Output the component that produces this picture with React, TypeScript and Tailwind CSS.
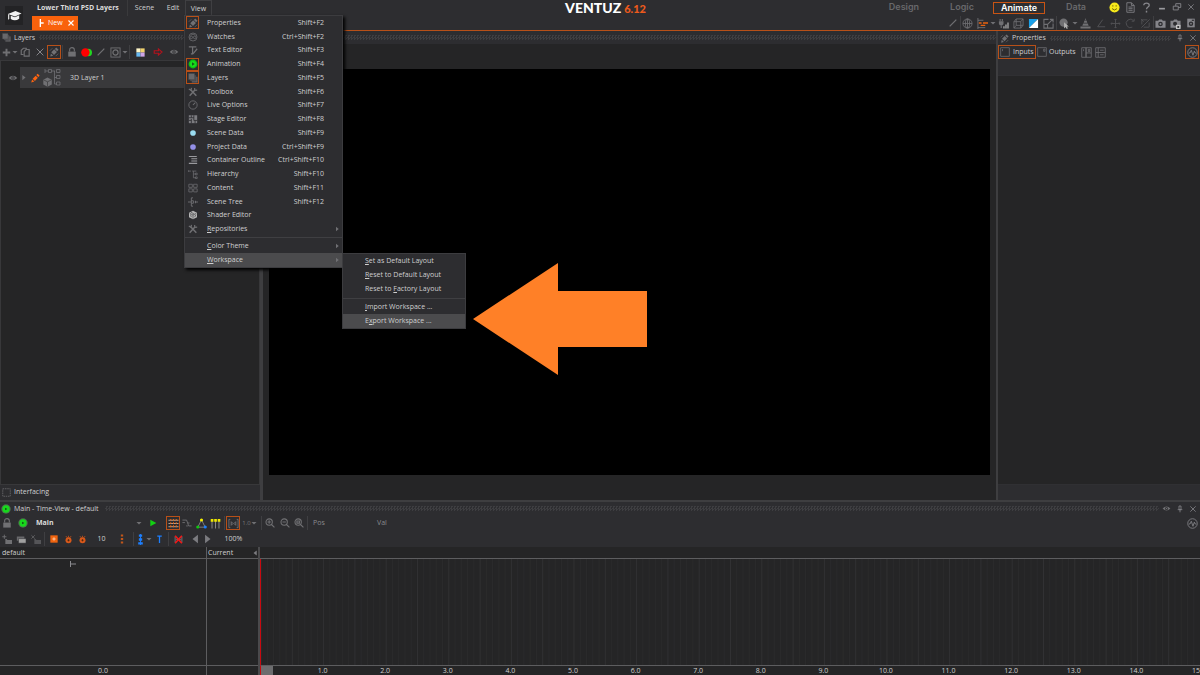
import React from "react";

const G = "#707073";

const art: Record<string, React.ReactNode> = {
  plus: <path d="M6 1v10M1 6h10" stroke={G} strokeWidth="2.600" />,
  copy: <path d="M4 9H1.500V4L4 1.500h3.500V3M5 11V5.500L7.300 3H11v8z" stroke={G} strokeWidth="1.400" />,
  x: <path d="M2 2l8 8M10 2l-8 8" stroke="#85858a" strokeWidth="1.200" />,
  pen: (
    <g fill={G}>
      <path d="M1.500 11.500l.8-3.800 2.900 2.800z" />
      <path d="M2.700 6.300l3.500-3.500 3.300 3.200L6 9.700z" />
      <path d="M7 2.300L8.700.5l2.800 2.700L9.800 5z" />
      <path d="M1 4.500L4 1.500M8 11l3-3" stroke={G} strokeWidth=".8" />
    </g>
  ),
  penOrange: (
    <g fill="#ff6410">
      <path d="M1.500 11.500l1-3.800 2.700 2.600z" />
      <path d="M3.200 6.800l3.600-3.600 2.600 2.600-3.500 3.700z" />
      <path d="M7.600 2.400L9.200.8l2.400 2.400L10 4.900z" />
    </g>
  ),
  lock: (
    <>
      <rect x="1.500" y="5.500" width="9" height="6" fill={G} />
      <path d="M3.200 5.500V3.200a2.800 2.500 0 015.600 0v2.300" stroke={G} strokeWidth="1.300" />
    </>
  ),
  redGreen: (
    <>
      <circle cx="7.800" cy="6" r="4.200" fill="#20d820" />
      <circle cx="4.800" cy="6" r="4.600" fill="#f00" />
    </>
  ),
  slash: <path d="M2 10l8-8" stroke={G} strokeWidth="1.500" />,
  mask: (
    <>
      <rect x="1" y="1" width="10" height="10" stroke={G} />
      <circle cx="6" cy="6" r="2.800" stroke={G} strokeWidth="1.300" />
    </>
  ),
  palette: (
    <>
      <path d="M1.500 1.500H6V6H1.500z" fill="#fff6c8" />
      <path d="M6 1.500h4.500V6H6z" fill="#f2d36e" />
      <path d="M1.500 6H6v4.500H1.500z" fill="#67b8f2" />
      <path d="M6 6h4.500v4.500H6z" fill="#cfa5e8" />
    </>
  ),
  redArrow: <path d="M1.500 4.500h5V2.300L10.800 6 6.500 9.700V7.500h-5z" stroke="#b3121c" strokeWidth="1.400" />,
  eye: (
    <>
      <path d="M.8 6Q6 .8 11.200 6 6 11.200.8 6z" fill={G} />
      <circle cx="6" cy="6" r="2" fill="#2d2d30" />
      <circle cx="6" cy="6" r="1" fill={G} />
    </>
  ),
  caret: <path d="M1 4h10L6 9z" fill={G} />,
  caretR: <path d="M4 1.500v9L9.500 6z" fill={G} />,
  globe: (
    <g stroke={G} strokeWidth=".9">
      <circle cx="6" cy="6" r="5" />
      <ellipse cx="6" cy="6" rx="2.300" ry="5" />
      <path d="M1 6h10M6 1v10" />
    </g>
  ),
  align: (
    <>
      <path d="M1 0v12M1 2.500h6M1 10.500h8" stroke={G} />
      <path d="M2 5.500h3M6.500 5.500H12M4 8h5" stroke="#e8630f" strokeWidth="1.500" />
    </>
  ),
  bars: (
    <>
      <path d="M1 3.500h5v3L5 8H2L1 6.500z" fill={G} />
      <path d="M2.300 1v2.500M4.700 1v2.500M3.500 8v3" stroke={G} strokeWidth="1.200" />
      <path d="M6.500 11.500V9M8.700 11.500V7M10.900 11.500V5" stroke="#b5b5b5" strokeWidth="1.300" />
    </>
  ),
  cube: <path d="M1 4h7.500v7H1zM3.500 1H11v7H3.500zM1 4l2.500-3M8.500 4L11 1M8.500 11L11 8M1 11l2.500-3" stroke={G} strokeWidth=".9" />,
  blueWhite: (
    <>
      <path d="M1 1h10L1 11z" fill="#1ba0e8" />
      <path d="M11 1v10H1z" fill="#fff" />
    </>
  ),
  resize: <path d="M6 1.500H1v9.500h10V6M1 7h4v4M5 7l5.500-5.500M7.500 1.500H11V5" stroke={G} strokeWidth="1.200" />,
  sphere: (
    <>
      <circle cx="5" cy="5" r="4.500" fill={G} />
      <path d="M5.500 4.500v7l1.700-1.600 1.300 2 1.200-.7-1.200-2h2.200z" fill="#b0b0b0" />
    </>
  ),
  cone: <path d="M.5 11.500V9.300h11v2.200zM2.500 8.500L3.500 6h5l1 2.500zM4 5.200L4.900 2.700h2.200L8 5.200zM5.200 2L6 .3 6.800 2z" fill={G} />,
  angle: <path d="M8 2L2 10.500h9" stroke="#515154" strokeWidth="1.200" />,
  move: <path d="M6 1v10M1 6h10M4.800 2.200L6 1l1.200 1.200M4.800 9.800L6 11l1.200-1.200M2.200 4.800L1 6l1.200 1.200M9.800 4.800L11 6 9.800 7.200" stroke="#515154" />,
  rotate: <path d="M9.500 3A4.600 4.600 0 108 10M10 .8V3.500H7.300" stroke="#515154" />,
  scale: <path d="M1.500 10.500L10.500 1.500M2 2h6M2 2v5M10 5v5H4M1 1l3 3" stroke="#515154" />,
  camera: (
    <>
      <path d="M.5 3h3l1-1.500h3l1 1.500h3v7.500H.5z" fill="#85858a" />
      <circle cx="6" cy="6.500" r="2.500" fill="#2d2d30" />
      <circle cx="6" cy="6.500" r="1.100" fill="#85858a" />
    </>
  ),
  cameraLock: (
    <>
      <path d="M.5 3h3l1-1.500h3l1 1.500h3v7.500H.5z" fill="#85858a" />
      <circle cx="5.500" cy="6.300" r="2.200" fill="#2d2d30" />
      <path d="M6.500 7.500h5V12h-5z" fill="#c5c5c5" />
      <path d="M8 8.800h2v2H8z" fill="#2d2d30" />
    </>
  ),
  disk: (
    <>
      <path d="M1.500.8h9v10.400h-9z" fill="#85858a" />
      <circle cx="6" cy="6.800" r="2.700" fill="#2d2d30" />
      <circle cx="6" cy="6.800" r="1" fill="#85858a" />
      <path d="M7 2h2.500v1.500H7z" fill="#2d2d30" />
    </>
  ),
  smiley: (
    <>
      <circle cx="6" cy="6" r="5.500" fill="#f7ea1b" />
      <path d="M4.200 3.500v1.500M7.800 3.500v1.500M3.300 7.200Q6 10.300 8.700 7.200" stroke="#6b6000" />
    </>
  ),
  doc: <path d="M2 .8h5l3 3v7.400H2zM7 .8v3h3M3.800 5.500h4.500M3.800 7.300h4.500M3.800 9.100h4.500" stroke="#85858a" strokeWidth=".9" />,
  help: (
    <>
      <path d="M3 3.500C3 .4 9 .4 9 3.600 9 5.500 6 5.600 6 8" stroke="#85858a" strokeWidth="1.400" />
      <path d="M5.200 9.500h1.600V11.500H5.200z" fill="#85858a" />
    </>
  ),
  min: <path d="M2.500 8h7" stroke="#9a9a9e" strokeWidth="2" />,
  restore: <path d="M1.500 5h6v4.500h-6zM4.500 5V2h6v4.500H7.500" stroke="#85858a" strokeWidth="1.100" />,
  pin: <path d="M4.500 1.500h3V7h-3zM2.500 7h7M6 7v4" stroke="#85858a" strokeWidth="1.200" />,
  wave: (
    <>
      <circle cx="6" cy="6" r="5.200" stroke="#85858a" strokeWidth=".9" />
      <path d="M1.800 6.500h1.500l1.400-3 1.800 5.500 1.500-4.500.9 2h1.400" stroke="#85858a" strokeWidth=".9" />
    </>
  ),
  inputs: <path d="M.8.8h10.400v10.400H.8zM3 2.500v2.500" stroke={G} strokeWidth=".9" />,
  outputs: <path d="M.8.8h10.400v10.400H.8zM8 2.500h1.500v2.700H8z" stroke={G} strokeWidth=".9" />,
  cols: <path d="M.8.8h4.700v10.400H.8zM5.500.8h5.700v10.400H5.500zM2.800 2.500v2M8 2.500h1.500v2.500H8zM5.500 6.500h5.700" stroke={G} strokeWidth=".9" />,
  rowsIcon: <path d="M.8.8h10.400v10.400H.8zM.8 6h10.400M3.500 1v10M5.500 3.500h4M5.500 8.500h4" stroke={G} strokeWidth=".9" />,
  layers: (
    <>
      <path d="M4.500 4.500h7v7h-7z" fill="#606063" />
      <path d="M2.500 2.500h7v7h-7z" fill="#57575a" stroke="#3a3a3d" strokeWidth=".5" />
      <path d="M.5.5h7.500V8H.5z" fill="#68686b" stroke="#3a3a3d" strokeWidth=".5" />
    </>
  ),
  watches: (
    <g stroke={G} strokeWidth=".9">
      <circle cx="6" cy="6" r="4.800" />
      <circle cx="4" cy="6.500" r="1.500" />
      <circle cx="8" cy="6.500" r="1.500" />
      <path d="M3 4l3-1.500L9 4" />
    </g>
  ),
  textEd: <path d="M1 2.200h9M5.500 2.200V10.500M3.500 10.500h2M11 4.500L7 9.500l-1.500 1.500" stroke={G} strokeWidth="1.500" />,
  anim: (
    <>
      <circle cx="6" cy="6" r="5.300" fill="#0cc112" />
      <circle cx="6" cy="6" r="3.600" fill="#19dc1e" />
      <path d="M4.800 4v4l3.300-2z" fill="#15551a" />
    </>
  ),
  tools: (
    <g stroke={G}>
      <path d="M3.500 3.500l6.500 7M8 4l-6 6.500" strokeWidth="1.800" />
      <path d="M1 2.500l2.500 1.500L4.200 1M8 1.200L8 4l3-.3" strokeWidth="1.400" />
    </g>
  ),
  gauge: (
    <g stroke={G} strokeWidth="1">
      <circle cx="6" cy="6" r="5" />
      <path d="M6 6l2.500-2.700" strokeWidth="1.300" />
    </g>
  ),
  stage: (
    <>
      <path d="M1 1.500h10v9.500H1z" fill="#7c7c80" />
      <path d="M1 4.500h6M7 7.700h4M1 7.700h3M4 1.500v3M7 1.500v6.200M4 6v5M8.500 7.700V11" stroke="#2d2d30" />
    </>
  ),
  cyan: <circle cx="6" cy="6" r="3.400" fill="#9adcf0" />,
  violet: <circle cx="6" cy="6" r="3.400" fill="#9490e8" />,
  outline: <path d="M1 1.800h9.500M4 4.500h7M4 7.200h7M1 10h10" stroke="#9a9a9e" strokeWidth="1.300" />,
  hier: <path d="M.5 1.500v2M.5 2.500h3M5 2.500h5M6.500 2.500v8M6.500 6H9M6.500 10.500H9M9 5h2v2H9zM9 9.500h2v2H9z" stroke={G} strokeWidth=".9" />,
  content: <path d="M1 1.500h4.200v3.700H1zM6.800 1.500H11v3.700H6.800zM1 7h4.200v3.700H1zM6.800 7H11v3.700H6.800z" stroke={G} strokeWidth=".9" />,
  tree: <path d="M0 6h4M6 1H4v10h2M4 4.500h2.500v3H4M8 6h4M9 4.500v3" stroke={G} strokeWidth="1.100" />,
  shader: (
    <>
      <path d="M6 .8l4.800 2.600v5.200L6 11.200 1.200 8.600V3.400z" fill="#b5b5b5" />
      <path d="M2 4l4 2 4-2M6 6v4.500M3.500 2.500L7.500 5M4 8.500l-1-3M8 8.500l1.500-3" stroke="#505053" strokeWidth=".9" />
    </>
  ),
  grid: (
    <>
      <path d="M.5 2.500h11M.5 6h11M.5 9.500h11" stroke="#c8b8a8" strokeWidth=".9" />
      <path d="M3 1v10M6 1v10M9 1v10" stroke="#e8630f" strokeWidth="1.100" strokeDasharray="2 1.500" />
    </>
  ),
  step: <path d="M.5 2.500h5L8 9.500h3.500M.5 5.500h3M5 9.500h2M7 6h2" stroke={G} strokeWidth="1.100" />,
  tri: (
    <>
      <path d="M6 2L2 10h8z" stroke="#999" strokeWidth=".8" />
      <circle cx="6" cy="2.200" r="1.700" fill="#f5f000" />
      <circle cx="1.900" cy="9.800" r="1.700" fill="#10c810" />
      <circle cx="10.100" cy="9.800" r="1.700" fill="#1c7fff" />
    </>
  ),
  keys: (
    <>
      <path d="M2.200 3v8.500M6 3v8.500M9.800 3v8.500" stroke="#999" strokeWidth=".9" />
      <path d="M.8 1h2.900v3H.8zM4.600 1h2.900v3H4.600zM8.400 1h2.900v3H8.400z" fill="#f0e800" />
    </>
  ),
  snap: <path d="M2.500 1.500H1v9h1.500M9.500 1.500H11v9H9.500M3.500 4v4l2-2zM8.500 4v4l-2-2z" stroke={G} />,
  zoomIn: <path d="M5 1a3.800 3.800 0 110 7.600A3.800 3.800 0 015 1zM7.800 7.800L11.300 11.300M3 4.800h4M5 2.800v4" stroke={G} strokeWidth="1.300" />,
  zoomOut: <path d="M5 1a3.800 3.800 0 110 7.600A3.800 3.800 0 015 1zM7.800 7.800L11.300 11.300M3 4.800h4" stroke={G} strokeWidth="1.300" />,
  zoomFit: <path d="M5 1a3.800 3.800 0 110 7.600A3.800 3.800 0 015 1zM7.800 7.800L11.300 11.300M3.500 3.500h3v2.600h-3z" stroke={G} strokeWidth="1.300" />,
  play: <path d="M2 1v10l9-5z" fill="#12d012" />,
  addTrack: (
    <>
      <path d="M4 6h1.500l1 1.200H12V12H4z" fill={G} />
      <path d="M2.800.8v5M.3 3.300h5" stroke={G} strokeWidth="1.100" />
    </>
  ),
  dupTrack: (
    <>
      <path d="M1 3h9v5H1z" fill="#68686b" />
      <path d="M3 5.500h9v5.500H3z" fill="#a0a0a0" stroke="#2d2d30" strokeWidth=".6" />
    </>
  ),
  delTrack: (
    <>
      <path d="M4 6h1.500l1 1.200H12V12H4z" fill="#555558" />
      <path d="M.5 1.500l4 4M4.500 1.500l-4 4" stroke="#666669" />
    </>
  ),
  keyAdd: (
    <>
      <path d="M.5.5h11v11H.5z" fill="#f0640f" />
      <path d="M6 3.500v5M3.500 6h5" stroke="#ffd7b8" strokeWidth="1.300" />
    </>
  ),
  bug: (
    <>
      <circle cx="6" cy="7" r="4" fill="#d8581a" />
      <path d="M2.500 1.500l2 2.200M9.500 1.500l-2 2.200M6 1v2" stroke="#d8581a" />
      <path d="M6 5.500v3M4.500 7h3" stroke="#33200f" strokeWidth=".9" />
    </>
  ),
  dots: <path d="M4.600.5h2.800v2.600H4.600zM4.600 4.700h2.800v2.600H4.600zM4.600 8.900h2.800v2.600H4.600z" fill="#c0561a" />,
  blueDots: (
    <>
      <path d="M6 0v12" stroke="#1c7fff" />
      <path d="M4.200.5h3.600v2.600H4.200zM4.200 4.700h3.600v2.600H4.200zM3.500 8.900h5v2.600h-5z" fill="#1c7fff" />
    </>
  ),
  blueT: <path d="M3 1.500h6M6 1.500v9" stroke="#1c7fff" strokeWidth="1.700" />,
  redX: (
    <>
      <path d="M1.500 2v8M10.500 2v8M3 6h6" stroke="#8a8a8d" />
      <path d="M1.500 1l9 10M10.500 1l-9 10" stroke="#f01818" strokeWidth="2.200" />
    </>
  ),
  prev: <path d="M9.500 1v10L3 6z" fill="#7c7c80" />,
  next: <path d="M2.500 1v10L9 6z" fill="#7c7c80" />,
  frame: <path d="M1 1h10v10H1z" stroke={G} strokeDasharray="2 1" />,
  greenDot: (
    <>
      <circle cx="6" cy="6" r="5.700" fill="#4b6b4d" />
      <circle cx="6" cy="6" r="4.400" fill="#17d81c" />
      <path d="M5 4.500v3L7.500 6z" fill="#123d14" />
    </>
  ),
};

function Icon({ name, size = "size-[10px]" }: { name: string; size?: string }) {
  return (
    <svg viewBox="0 0 12 12" fill="none" className={`${size} shrink-0`} aria-hidden="true">
      {art[name]}
    </svg>
  );
}

function Tool({ icon, w = "w-[15px]", boxed = false, size }: { icon: string; w?: string; boxed?: boolean; size?: string }) {
  return (
    <button
      aria-label={icon}
      className={`flex h-[14px] shrink-0 items-center justify-center ${w} ${boxed ? "border border-[#b85018]" : ""}`}
    >
      <Icon name={icon} size={size} />
    </button>
  );
}

function Caret({ w = "w-[6px]" }: { w?: string }) {
  return <Tool icon="caret" w={w} size="size-[6px]" />;
}

function Sep({ m = "" }: { m?: string }) {
  return <span className={`h-[14px] w-px shrink-0 bg-[#3f3f42] ${m}`} />;
}

function Hatch() {
  return (
    <span className="h-[5px] min-w-0 flex-1 bg-[repeating-conic-gradient(#3e3e41_0_25%,#2d2d30_0_50%)] bg-[length:3px_3px]" />
  );
}

const viewItems: [string, string, string, boolean?][] = [
  ["pen", "Properties", "Shift+F2", true],
  ["watches", "Watches", "Ctrl+Shift+F2"],
  ["textEd", "Text Editor", "Shift+F3"],
  ["anim", "Animation", "Shift+F4", true],
  ["layers", "Layers", "Shift+F5", true],
  ["tools", "Toolbox", "Shift+F6"],
  ["gauge", "Live Options", "Shift+F7"],
  ["stage", "Stage Editor", "Shift+F8"],
  ["cyan", "Scene Data", "Shift+F9"],
  ["violet", "Project Data", "Ctrl+Shift+F9"],
  ["outline", "Container Outline", "Ctrl+Shift+F10"],
  ["hier", "Hierarchy", "Shift+F10"],
  ["content", "Content", "Shift+F11"],
  ["tree", "Scene Tree", "Shift+F12"],
  ["shader", "Shader Editor", ""],
];

function SubLabel({ pre = "", u, rest }: { pre?: string; u: string; rest: string }) {
  return (
    <span>
      {pre}
      <u>{u}</u>
      {rest}
    </span>
  );
}

function ViewMenu() {
  return (
    <div role="menu" className="absolute left-[184px] top-[15px] z-20 w-[159px] border border-[#3c3c3f] bg-[#2d2d30] shadow-[2px_2px_3px_#000000]">
      <div className="grid h-[220px] grid-rows-[repeat(16,minmax(0,1fr))]">
        {viewItems.map(([icon, label, key, on]) => (
          <button key={label} role="menuitem" className="flex min-h-0 items-center pl-px pr-[18px] text-left">
            <span className={`mr-[8px] flex size-[13px] shrink-0 items-center justify-center ${on ? "border border-[#b85018]" : ""}`}>
              <Icon name={icon} />
            </span>
            <span className="flex-1">{label}</span>
            <span>{key}</span>
          </button>
        ))}
        <button role="menuitem" className="flex min-h-0 items-center pl-px pr-[2px] text-left">
          <span className="mr-[8px] flex size-[13px] shrink-0 items-center justify-center">
            <Icon name="tools" />
          </span>
          <span className="flex-1"><SubLabel u="R" rest="epositories" /></span>
          <Icon name="caretR" size="size-[6px]" />
        </button>
      </div>
      <hr className="my-px border-[#3f3f42]" />
      <button role="menuitem" className="flex h-[14px] w-full items-center justify-between pl-[22px] pr-[2px]">
        <SubLabel u="C" rest="olor Theme" />
        <Icon name="caretR" size="size-[6px]" />
      </button>
      <button role="menuitem" className="flex h-[14px] w-full items-center justify-between bg-[#4b4b4d] pl-[22px] pr-[2px]">
        <SubLabel u="W" rest="orkspace" />
        <Icon name="caretR" size="size-[6px]" />
      </button>
    </div>
  );
}

function WorkspaceMenu() {
  return (
    <div role="menu" className="absolute left-[342px] top-[253px] z-20 w-[124px] border border-[#3c3c3f] bg-[#2d2d30]">
      {[["", "S", "et as Default Layout"], ["", "R", "eset to Default Layout"], ["Reset to ", "F", "actory Layout"]].map(([p, u, r]) => (
        <button key={r} role="menuitem" className="flex h-[14px] w-full items-center pl-[22px]">
          <SubLabel pre={p} u={u} rest={r} />
        </button>
      ))}
      <hr className="mb-px mt-[2px] border-[#3f3f42]" />
      <button role="menuitem" className="flex h-[14px] w-full items-center pl-[22px]">
        <SubLabel u="I" rest="mport Workspace ..." />
      </button>
      <button role="menuitem" className="flex h-[14px] w-full items-center bg-[#4b4b4d] pl-[22px]">
        <SubLabel pre="E" u="x" rest="port Workspace ..." />
      </button>
    </div>
  );
}

function Header() {
  return (
    <header className="grid h-[31px] shrink-0 grid-cols-[minmax(0,1fr)_auto_minmax(0,1fr)] border-b border-[#b85018]">
      <div className="flex">
        <button aria-label="Learn" className="ml-[5px] mt-[6px] flex h-[19px] w-[18px] items-center justify-center bg-[#232325]">
          <svg viewBox="0 0 16 12" className="w-[15px]" fill="#f2f2f2" aria-hidden="true">
            <path d="M1 4.200L9 1l6.500 2.800L8.500 7z" />
            <path d="M4 6v3.500q4.500 2.800 9-.3V5.600L8.500 7.700z" />
            <path d="M1.200 4.300L2.400 5v4.500l-1.200.8z" />
          </svg>
        </button>
        <div className="ml-[9px] flex flex-col">
          <nav className="flex h-[16px] items-center">
            <span className="w-[95px] whitespace-nowrap pl-[5px] font-bold text-[#dcdcdc]">Lower Third PSD Layers</span>
            <button className="h-full w-[34px] border-l border-[#3a3a3c]">Scene</button>
            <button className="w-[24px]">Edit</button>
            <button className="h-full w-[27px] border border-b-0 border-[#3f3f42]">View</button>
          </nav>
          <button className="flex h-[14px] w-[46px] items-center bg-[#f9620c] pl-[6px] text-white">
            <svg viewBox="0 0 8 12" className="mr-[4px] h-[8px] w-[6px]" fill="none" stroke="#fff" strokeWidth="2" aria-hidden="true">
              <path d="M3 0v12M3 6h5" />
            </svg>
            <span>New</span>
            <svg viewBox="0 0 12 12" className="ml-[5px] size-[6px]" stroke="#fff" strokeWidth="2.200" aria-hidden="true">
              <path d="M1 1l10 10M11 1L1 11" />
            </svg>
          </button>
        </div>
      </div>
      <h1 className="mr-[-11px] flex items-baseline gap-[3px] font-[Lato,sans-serif] text-[14px] font-black leading-[15px] text-white">
        VENTUZ <span className="text-[11px] text-[#ee5a1c]">6.12</span>
      </h1>
      <div className="flex flex-col items-end">
        <nav className="flex h-[14px] items-center pr-[2px] font-[Inter,sans-serif] text-[9px] font-semibold text-[#68686b]">
          <button className="w-[58px]">Design</button>
          <button className="w-[58px]">Logic</button>
          <button className="ml-[2px] mt-px h-[12px] w-[52px] border border-[#c85414] leading-[10px] text-white">Animate</button>
          <button className="w-[62px]">Data</button>
          <Tool icon="smiley" w="w-[15px]" size="size-[11px]" />
          <Tool icon="doc" w="w-[17px]" size="size-[11px]" />
          <Tool icon="help" w="w-[15px]" size="size-[11px]" />
          <Tool icon="min" />
          <Tool icon="restore" />
          <Tool icon="x" w="w-[14px]" size="size-[8px]" />
        </nav>
        <div className="flex items-center pr-[2px] pt-[2px]">
          <Tool icon="slash" /><Sep m="-mr-px" />
          <Tool icon="globe" size="size-[11px]" /><Tool icon="align" size="size-[11px]" /><Caret /><Tool icon="bars" size="size-[11px]" /><Tool icon="cube" size="size-[11px]" /><Tool icon="blueWhite" size="size-[11px]" /><Tool icon="resize" size="size-[11px]" />
          <Sep /><Tool icon="sphere" size="size-[11px]" /><Caret /><Tool icon="cone" size="size-[11px]" /><Tool icon="angle" /><Tool icon="move" size="size-[11px]" /><Tool icon="rotate" size="size-[11px]" /><Tool icon="scale" size="size-[11px]" />
          <Sep m="-mr-px" /><Tool icon="camera" size="size-[11px]" /><Tool icon="cameraLock" size="size-[11px]" /><Tool icon="disk" />
        </div>
      </div>
    </header>
  );
}

function LayersPanel() {
  return (
    <aside className="flex w-[260px] shrink-0 flex-col">
      <div className="flex h-[13px] items-center pl-[2px]">
        <Icon name="layers" size="size-[9px]" />
        <h2 className="ml-[3px] mr-[4px]">Layers</h2>
        <Hatch />
      </div>
      <div className="flex h-[16px] items-center">
        <Tool icon="plus" w="w-[12px]" size="size-[9px]" /><Caret w="w-[5px]" /><Tool icon="copy" /><Tool icon="x" /><Tool icon="pen" w="w-[14px]" boxed />
        <Sep m="mx-px" /><Tool icon="lock" /><Tool icon="redGreen" size="size-[11px]" /><Tool icon="slash" w="w-[14px]" /><Tool icon="mask" w="w-[14px]" size="size-[11px]" /><Caret />
        <Sep m="mx-px" /><Tool icon="palette" w="w-[18px]" size="size-[11px]" /><Tool icon="redArrow" w="w-[17px]" /><Tool icon="eye" />
      </div>
      <div className="flex-1 border-x border-t border-[#38383a] bg-[#252526] pt-[6px]">
        <div className="flex h-[21px] items-center pl-[7px]">
          <Icon name="eye" />
          <div className="ml-[2px] flex h-full flex-1 items-center bg-[#39393b]">
            <Icon name="caretR" size="size-[7px]" />
            <span className="ml-[3px]"><Icon name="penOrange" /></span>
            <svg viewBox="0 0 20 20" className="ml-[3px] size-[20px]" fill="none" stroke={G} strokeWidth="1" aria-hidden="true">
              <path d="M2 1v4M2 3h3M5.500 1.500h3v3h-3zM8.500 3H12M11.500 3v13H14M11.500 9.500H14M13.500 1.500h3.500v3h-3.500zM13.500 7.500h3.500v3h-3.500zM13.500 14h3.500v3h-3.500z" strokeWidth=".8" />
              <path d="M4.500 9.500l4.300 2.200v4.800l-4.300 2.300L.3 16.500v-4.800z" fill={G} stroke="none" />
              <path d="M.5 11.800l4 2 4-2M4.500 13.800v4.800" stroke="#39393b" strokeWidth=".7" />
            </svg>
            <span className="ml-[7px]">3D Layer 1</span>
          </div>
        </div>
      </div>
      <div className="flex h-[16px] items-center gap-[3px] border-t border-[#38383a] pb-px pl-[2px]">
        <Icon name="frame" size="size-[9px]" />
        <span>Interfacing</span>
      </div>
    </aside>
  );
}

function PropertiesPanel() {
  return (
    <aside className="flex w-[202px] shrink-0 flex-col">
      <div className="flex h-[14px] items-center pl-[2px]">
        <Icon name="pen" size="size-[9px]" />
        <h2 className="ml-[3px] mr-[4px]">Properties</h2>
        <Hatch />
        <span className="w-[3px]" />
        <Tool icon="pin" w="w-[11px]" size="size-[8px]" />
        <Tool icon="x" size="size-[8px]" />
      </div>
      <div className="flex h-[14px] items-center">
        <button className="flex h-[14px] w-[38px] items-center gap-[3px] border border-[#b85018] pl-px">
          <Icon name="inputs" />Inputs
        </button>
        <button className="ml-px flex w-[42px] items-center gap-[2px]">
          <Icon name="outputs" />Outputs
        </button>
        <Tool icon="cols" w="w-[14px]" size="size-[11px]" /><Tool icon="rowsIcon" size="size-[11px]" />
        <span className="flex-1" />
        <Tool icon="wave" w="w-[14px]" boxed size="size-[11px]" />
        <span className="w-px" />
      </div>
      <div className="mt-[16px] flex-1 border-y border-[#303033] bg-[#252526]" />
      <div className="h-[15px]" />
    </aside>
  );
}

function TimelineGrid() {
  return (
    <svg className="block h-full w-full" aria-hidden="true">
      {Array.from({ length: 150 }, (_, i) => (
        <line key={i} x1={`${i / 1.5}%`} x2={`${i / 1.5}%`} y1="0" y2="100%" stroke={i % 5 === 0 ? "#313133" : "#2b2b2c"} />
      ))}
    </svg>
  );
}

function Timeline() {
  return (
    <section className="flex h-[173px] shrink-0 flex-col">
      <div className="flex h-[13px] items-center pl-px">
        <Icon name="greenDot" />
        <h2 className="ml-[3px] mr-[6px]">Main - Time-View - default</h2>
        <Hatch />
        <Tool icon="eye" size="size-[9px]" />
        <Tool icon="pin" w="w-[11px]" size="size-[8px]" />
        <Tool icon="x" size="size-[8px]" />
      </div>
      <div className="flex h-[16px] items-center">
        <Tool icon="lock" w="w-[14px]" /><Tool icon="greenDot" w="w-[17px]" />
        <span className="w-[105px] pl-[5px] font-bold text-[#dcdcdc]">Main</span>
        <Caret /><Tool icon="play" w="w-[22px]" size="size-[8px]" /><span className="w-[2px]" />
        <Tool icon="grid" w="w-[14px]" boxed size="size-[11px]" /><Tool icon="step" w="w-[14px]" /><Tool icon="tri" w="w-[14px]" size="size-[11px]" /><Tool icon="keys" w="w-[15px]" size="size-[11px]" />
        <Sep m="mx-px" /><Tool icon="snap" w="w-[14px]" boxed size="size-[11px]" />
        <span className="w-[11px] pl-[2px] text-center text-[6px] text-[#77777a]">1.0</span><Caret />
        <Sep m="ml-[4px]" /><Tool icon="zoomIn" /><Tool icon="zoomOut" /><Tool icon="zoomFit" w="w-[14px]" /><Sep m="ml-px" />
        <label htmlFor="pos" className="ml-[5px] w-[13px] text-[#8a8a8e]">Pos</label>
        <input id="pos" className="w-[51px] min-w-0 bg-transparent outline-none" />
        <label htmlFor="val" className="text-[#8a8a8e]">Val</label>
        <input id="val" className="w-[52px] min-w-0 bg-transparent outline-none" />
        <span className="flex-1" />
        <Tool icon="wave" size="size-[11px]" />
      </div>
      <div className="flex h-[16px] items-center">
        <Tool icon="addTrack" w="w-[14px]" /><Tool icon="dupTrack" w="w-[14px]" /><Tool icon="delTrack" /><Sep m="mx-px" />
        <Tool icon="keyAdd" size="size-[8px]" /><Tool icon="bug" w="w-[14px]" size="size-[9px]" /><Tool icon="bug" w="w-[14px]" size="size-[9px]" />
        <span className="w-[25px] text-center">10</span><Tool icon="dots" /><span className="w-[4px]" /><Sep />
        <Tool icon="blueDots" w="w-[12px]" size="size-[11px]" /><Caret w="w-[5px]" /><Tool icon="blueT" w="w-[17px]" size="size-[9px]" /><Sep />
        <Tool icon="redX" w="w-[19px]" size="size-[9px]" /><Tool icon="prev" w="w-[13px]" /><Tool icon="next" w="w-[14px]" />
        <span className="w-[37px] text-center">100%</span>
      </div>
      <div className="flex min-h-0 flex-1 bg-[#252526]">
        <div className="flex w-[207px] flex-col border-r border-[#5d5d5f]">
          <div className="h-[12px] border-b border-[#5d5d5f] pl-[2px] leading-[11px]">default</div>
          <div className="flex-1 pl-[70px] pt-[2px]">
            <svg viewBox="0 0 6 6" className="size-[6px]" stroke="#8a8a8e" fill="none" aria-hidden="true">
              <path d="M.5 0v6M.5 3H6" />
            </svg>
          </div>
          <div className="h-[10px] border-t border-[#5d5d5f] text-center leading-[9px]">0.0</div>
        </div>
        <div className="flex w-[53px] flex-col border-r-2 border-[#4a4a4c]">
          <div className="flex h-[12px] items-center justify-between border-b border-[#5d5d5f] pl-px leading-[11px]">
            Current <Icon name="prev" size="size-[6px]" />
          </div>
          <div className="flex-1" />
          <div className="h-[10px] border-t border-[#5d5d5f]" />
        </div>
        <div className="flex min-w-0 flex-1 flex-col">
          <div className="h-[12px] border-b border-[#5d5d5f]" />
          <div className="min-h-0 flex-1 border-l border-[#c80a10]"><TimelineGrid /></div>
          <div className="flex h-[10px] border-l border-l-[#c80a10] border-t border-t-[#5d5d5f] leading-[9px]">
            {Array.from({ length: 15 }, (_, i) => (
              <span key={i} className="flex min-w-0 flex-1 justify-between">
                <span className={i === 0 ? "w-[12px] bg-[#6d6d6f]" : ""} />
                {i < 14 ? <span className="-mr-[9px] w-[20px] text-center">{`${i + 1}.0`}</span> : <span>15</span>}
              </span>
            ))}
          </div>
        </div>
      </div>
    </section>
  );
}

export default function App() {
  return (
    <div className="relative flex h-screen w-full flex-col overflow-hidden bg-[#2d2d30] font-['Open_Sans','Noto_Sans',sans-serif] text-[7px] leading-[10px] text-[#d0d0d0]">
      <Header />
      <div className="flex min-h-0 flex-1">
        <LayersPanel />
        <div className="w-[3px] bg-[#3e3e40]" />
        <main className="flex min-w-0 flex-1 flex-col bg-[#252526]">
          <div className="flex h-[13px] items-center bg-[#2d2d30]"><Hatch /></div>
          <div className="flex min-h-0 flex-1 items-center px-[6px]">
            <div className="aspect-video w-full bg-black" />
          </div>
        </main>
        <div className="w-[2px] bg-[#3e3e40]" />
        <PropertiesPanel />
      </div>
      <div className="h-[2px] shrink-0 bg-[#3e3e40]" />
      <Timeline />
      <ViewMenu />
      <WorkspaceMenu />
      <svg viewBox="0 0 174 112" className="absolute left-[473px] top-[263px] w-[174px]" fill="#ff8027" aria-hidden="true">
        <path d="M0 56L85 0v28h89v56H85v28z" />
      </svg>
    </div>
  );
}
